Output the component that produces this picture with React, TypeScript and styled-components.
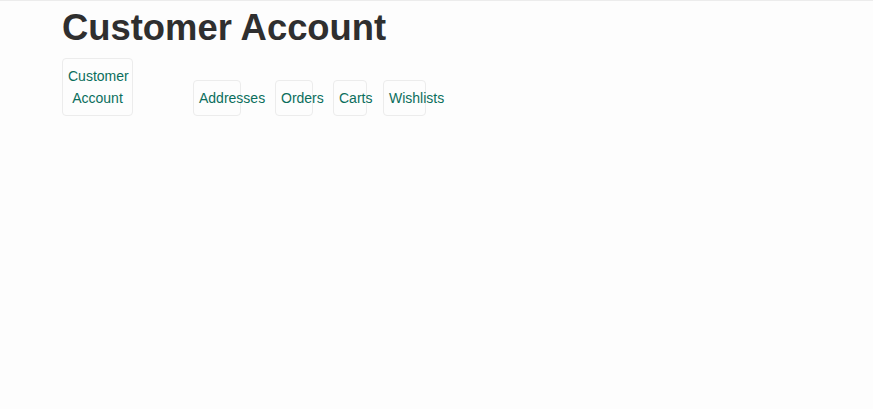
import styled, { createGlobalStyle } from "styled-components";

const GlobalStyle = createGlobalStyle`
  body {
    margin: 0;
    background: #fdfdfd;
    font-family: "Liberation Sans", Arial, sans-serif;
    color: #333;
  }
`;

const Page = styled.div`
  border-top: 1px solid #ececec;
  padding: 0 62px;
  min-height: 408px;
`;

const Title = styled.h1`
  margin: 7px 0 0;
  font-size: 36.4px;
  line-height: 40px;
  font-weight: bold;
  color: #2f2f2f;
`;

const Tabs = styled.nav`
  display: flex;
  align-items: flex-end;
  margin-top: 10px;
`;

const Slot = styled.div<{ $slot: number }>`
  flex: 0 0 auto;
  width: ${(p) => p.$slot}px;
`;

const Tab = styled.a<{ $box: number; $wrap?: boolean }>`
  display: block;
  box-sizing: border-box;
  width: ${(p) => p.$box}px;
  padding: 6px 5px;
  border: 1px solid #ececec;
  border-radius: 4px;
  font-size: 14px;
  line-height: 22px;
  color: #0b6e5c;
  text-decoration: none;
  text-align: ${(p) => (p.$wrap ? "center" : "left")};
  white-space: ${(p) => (p.$wrap ? "normal" : "nowrap")};
  cursor: pointer;
`;

const tabs = [
  { label: "Customer Account", box: 71, slot: 131, wrap: true },
  { label: "Addresses", box: 48, slot: 82 },
  { label: "Orders", box: 38, slot: 58 },
  { label: "Carts", box: 34, slot: 50 },
  { label: "Wishlists", box: 43, slot: 80 },
];

export default function App() {
  return (
    <>
      <GlobalStyle />
      <Page>
        <Title>Customer Account</Title>
        <Tabs>
          {tabs.map((t) => (
            <Slot key={t.label} $slot={t.slot}>
              <Tab $box={t.box} $wrap={t.wrap}>
                {t.label}
              </Tab>
            </Slot>
          ))}
        </Tabs>
      </Page>
    </>
  );
}
